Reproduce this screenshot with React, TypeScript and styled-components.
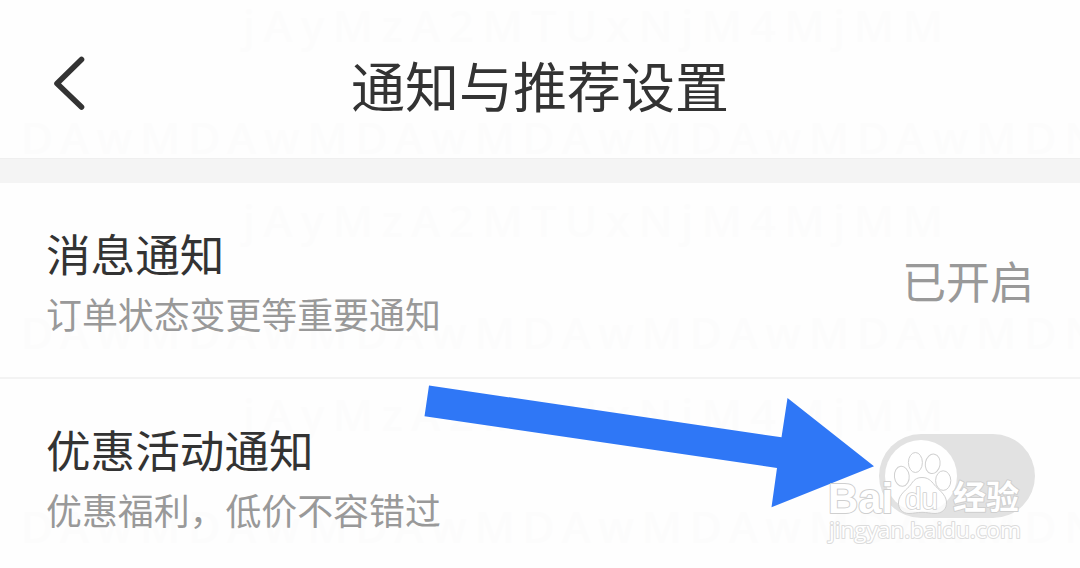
import React, {useState} from "react";
import styled, {createGlobalStyle} from "styled-components";

const GlobalStyle = createGlobalStyle`
    body {
        margin: 0;
        background: #fefefe;
        font-family: "Noto Sans CJK SC", "Noto Sans", sans-serif;
        font-weight: 400;
    }
`;

const Page = styled.div`
    position: relative;
    display: flex;
    flex-direction: column;
    width: 1080px;
    height: 568px;
    overflow: hidden;
`;

const Header = styled.header`
    display: grid;
    grid-template-columns: 140px 1fr 140px;
    align-items: center;
    flex-shrink: 0;
    height: 158px;
    padding-top: 11px;
    box-sizing: border-box;
`;

const BackButton = styled.button`
    display: flex;
    width: 48px;
    height: 64px;
    margin: 0 0 4px 46px;
    padding: 0;
    border: 0;
    background: none;
`;

const Title = styled.h1`
    margin: 0;
    color: #333;
    font-size: 54px;
    line-height: 76px;
    font-weight: 400;
    text-align: center;
`;

const Band = styled.div`
    flex-shrink: 0;
    height: 25px;
    border-top: 1px solid #efefef;
    box-sizing: border-box;
    background: #f4f4f4;
`;

const Row = styled.section`
    display: flex;
    align-items: center;
    justify-content: space-between;
    flex-shrink: 0;
    height: 196px;
    padding: 1px 45px 0 46px;
    border-bottom: 2px solid #f3f3f3;
    box-sizing: border-box;
`;

const RowText = styled.div`
    display: flex;
    flex-direction: column;
`;

const RowTitle = styled.h2`
    margin: 0;
    color: #333;
    font-size: 44.6px;
    line-height: 66px;
    font-weight: 400;
`;

const RowHint = styled.p`
    margin: 0;
    color: #999;
    font-size: 35.9px;
    line-height: 55px;
`;

const RowValue = styled.span`
    margin: 0 1px 1px 0;
    color: #999;
    font-size: 44px;
    line-height: 60px;
`;

const Switch = styled.button<{$on: boolean}>`
    display: flex;
    justify-content: ${p => p.$on ? "flex-end" : "flex-start"};
    width: 156px;
    height: 84px;
    margin: 0 0 1px;
    padding: 6px;
    border: 0;
    border-radius: 42px;
    background: ${p => p.$on ? "#2f77f6" : "#e2e2e2"};
`;

const Knob = styled.span`
    width: 72px;
    height: 72px;
    border-radius: 50%;
    background: #fff;
`;

const Faint = styled.span<{$x: number, $y: number, $gap: number}>`
    position: absolute;
    left: ${p => p.$x}px;
    top: ${p => p.$y}px;
    color: #fcfcfc;
    font-family: "Noto Sans", sans-serif;
    font-size: 44px;
    font-weight: 500;
    line-height: 60px;
    letter-spacing: ${p => p.$gap}px;
    white-space: nowrap;
    z-index: -1;
`;

const Overlay = styled.svg`
    position: absolute;
    left: 0;
    top: 0;
    pointer-events: none;
`;

const offsets = [0, 195, 389];

const BaiduMark: React.FC = () => (
    <g fill="#fff" fillOpacity="0.8" stroke="#d0d0d0" strokeWidth="1">
        <ellipse cx="901.8" cy="476.3" rx="7.4" ry="10" transform="rotate(-6 901.8 476.3)"/>
        <ellipse cx="915.4" cy="462.5" rx="7" ry="10"/>
        <ellipse cx="932.7" cy="463.8" rx="7.4" ry="9.8" transform="rotate(10 932.7 463.8)"/>
        <ellipse cx="943.2" cy="480.6" rx="7.6" ry="9.8"/>
        <path d="M922 477.500c-6 0-8.500 3-11.500 7.500-3 4-11.500 9-12 17-.5 7 4 11.500 10.500 11.500 5 0 8-1.200 13-1.200s8 1.200 13 1.200c7 0 12-4.500 11.500-11.500-.5-8-9-13-12-17-3.500-4.500-6.500-7.500-12.500-7.500z"/>
        <g strokeLinejoin="round" paintOrder="stroke" fillOpacity="1" stroke="#cfcfcf" strokeWidth="2">
            <text x="828" y="512.500" fontFamily="Liberation Sans" fontWeight="700" fontSize="42.500" textLength="65" lengthAdjust="spacingAndGlyphs">Bai</text>
            <text x="905" y="508.500" fontFamily="Liberation Sans" fontSize="29" textLength="33" lengthAdjust="spacingAndGlyphs" strokeWidth="1.600">du</text>
            <text x="953" y="509" fontFamily="Noto Sans CJK SC" fontWeight="700" fontSize="33" textLength="66" lengthAdjust="spacingAndGlyphs">经验</text>
            <text x="829" y="538" fontFamily="Open Sans" fontSize="22" textLength="192" lengthAdjust="spacingAndGlyphs" stroke="#dcdcdc">jingyan.baidu.com</text>
        </g>
    </g>
);

const App: React.FC = () => {
    const [promo, setPromo] = useState(false);

    return(
        <Page>
            <GlobalStyle/>
            {offsets.map(y => (
                <React.Fragment key={y}>
                    <Faint $x={243} $y={-5 + y} $gap={8.6}>jAyMzA2MTUxNjM4MjMM</Faint>
                    <Faint $x={21} $y={107 + y} $gap={7.8}>DAwMDAwMDAwMDAwMDAwMDAwMDN</Faint>
                </React.Fragment>
            ))}
            <Header>
                <BackButton aria-label="返回">
                    <svg width="48" height="64" fill="none" stroke="#333" strokeWidth="5.6" strokeLinecap="round" strokeLinejoin="round">
                        <path d="M35.500 8.500L11 32.500L35.500 56"/>
                    </svg>
                </BackButton>
                <Title>通知与推荐设置</Title>
            </Header>
            <Band/>
            <Row>
                <RowText>
                    <RowTitle>消息通知</RowTitle>
                    <RowHint>订单状态变更等重要通知</RowHint>
                </RowText>
                <RowValue>已开启</RowValue>
            </Row>
            <Row>
                <RowText>
                    <RowTitle>优惠活动通知</RowTitle>
                    <RowHint>优惠福利，低价不容错过</RowHint>
                </RowText>
                <Switch $on={promo} onClick={() => setPromo(!promo)}>
                    <Knob/>
                </Switch>
            </Row>
            <Overlay width="1080" height="568">
                <path fill="#2f77f6" d="M429 385.500L781.500 437.300L787.500 398L874 466.300L771.500 507.300L777 468L424.500 416.300z"/>
                <BaiduMark/>
            </Overlay>
        </Page>
    );
};

export default App;
